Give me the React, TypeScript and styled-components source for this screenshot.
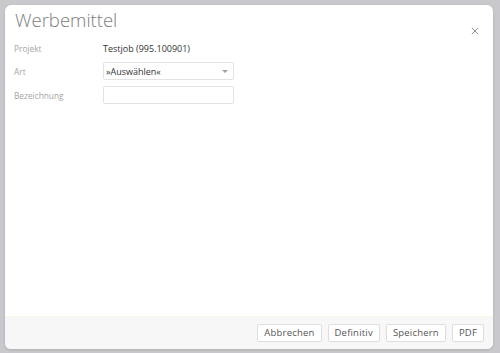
import { createGlobalStyle, styled } from "styled-components";

const Global = createGlobalStyle`
  html, body {
    margin: 0;
    padding: 0;
    background: #c9c9cd;
    font-family: "Open Sans", "DejaVu Sans", sans-serif;
  }
  * { box-sizing: border-box; }
`;

const App = () => {
  return (
    <>
      <Global />
      <Backdrop>
        <Modal>
          <Header>
            <Title>Werbemittel</Title>
            <CloseButton aria-label="Schließen">
              <svg width="8" height="8" viewBox="0 0 10 10">
                <path d="M1 1 L9 9 M9 1 L1 9" stroke="#8a8a8a" strokeWidth="1.2" />
              </svg>
            </CloseButton>
          </Header>
          <Body>
            <Row $short>
              <Label>Projekt</Label>
              <Value>Testjob (995.100901)</Value>
            </Row>
            <Row>
              <Label>Art</Label>
              <Select>
                <span>»Auswählen«</span>
                <Caret />
              </Select>
            </Row>
            <Row>
              <Label>Bezeichnung</Label>
              <Input />
            </Row>
          </Body>
          <Footer>
            <Button>Abbrechen</Button>
            <Button>Definitiv</Button>
            <Button>Speichern</Button>
            <Button>PDF</Button>
          </Footer>
        </Modal>
      </Backdrop>
    </>
  );
};

const Backdrop = styled.div`
  width: 500px;
  height: 353px;
  padding: 5px 7px 4px 5px;
`;

const Modal = styled.div`
  height: 100%;
  background: #fff;
  border-radius: 6px;
  display: flex;
  flex-direction: column;
  overflow: hidden;
  box-shadow: 0 1px 3px rgba(0, 0, 0, 0.15);
`;

const Header = styled.div`
  display: flex;
  justify-content: space-between;
  align-items: flex-start;
  padding: 2px 14px 0 10px;
  height: 36px;
`;

const Title = styled.h1`
  margin: 0;
  font-size: 18.5px;
  line-height: 26px;
  font-weight: 300;
  color: #7d7d7d;
`;

const CloseButton = styled.button`
  border: none;
  background: none;
  padding: 0;
  margin-top: 20px;
  cursor: pointer;
  line-height: 0;
`;

const Body = styled.div`
  flex: 1;
  display: flex;
  flex-direction: column;
  gap: 6px;
  padding: 0 9px;
`;

const Row = styled.div<{ $short?: boolean }>`
  display: flex;
  align-items: center;
  height: ${(p) => (p.$short ? "15px" : "18px")};
`;

const Label = styled.div`
  width: 89px;
  font-size: 8.3px;
  color: #a4a4a4;
`;

const Value = styled.div`
  font-size: 9px;
  color: #333;
`;

const fieldBox = `
  width: 131px;
  height: 18px;
  border: 1px solid #e3e3e3;
  border-radius: 2px;
  background: #fff;
`;

const Select = styled.div`
  ${fieldBox}
  display: flex;
  align-items: center;
  justify-content: space-between;
  padding: 0 5px 0 2px;
  font-size: 9px;
  color: #333;
`;

const Caret = styled.span`
  width: 0;
  height: 0;
  margin-top: 1px;
  border-left: 3px solid transparent;
  border-right: 3px solid transparent;
  border-top: 3px solid #a0a0a0;
`;

const Input = styled.input`
  ${fieldBox}
  outline: none;
`;

const Footer = styled.div`
  height: 33px;
  background: #f7f7f7;
  border-top: 1px solid #faf6e4;
  display: flex;
  justify-content: flex-end;
  align-items: center;
  gap: 6px;
  padding: 0 9px 1px 0;
`;

const Button = styled.button`
  height: 18px;
  padding: 0 6px;
  background: #fff;
  border: 1px solid #dedede;
  border-radius: 2px;
  font-family: inherit;
  font-size: 9.5px;
  letter-spacing: 0.2px;
  color: #555;
  cursor: pointer;
`;

export default App;
